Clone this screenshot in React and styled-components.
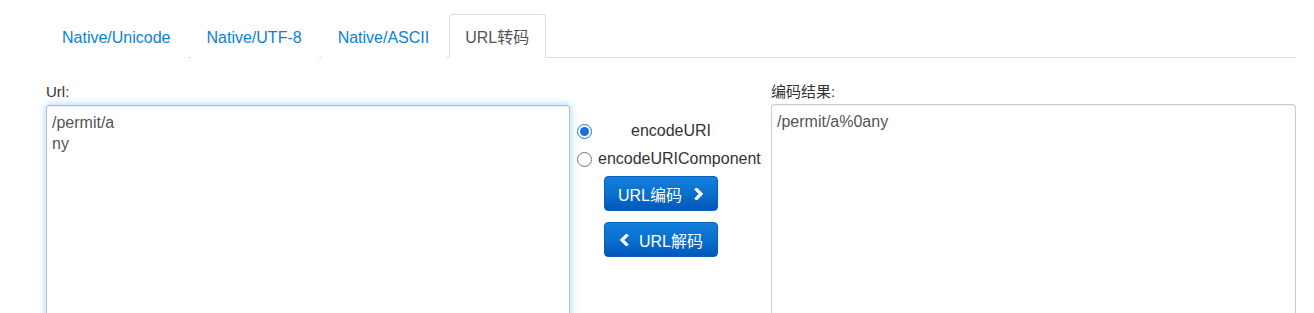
import React from "react";
import styled, { createGlobalStyle } from "styled-components";

const Global = createGlobalStyle`
  html, body { margin: 0; padding: 0; background: #fff; }
  body { font-family: "Liberation Sans", Arial, "Noto Sans CJK SC", sans-serif; color: #333; }
  * { box-sizing: border-box; }
`;

const Page = styled.div`
  padding: 14px 18px 0 46px;
  width: 1314px;
  height: 313px;
  overflow: hidden;
`;

const TabList = styled.ul`
  display: flex;
  list-style: none;
  margin: 0;
  padding: 0;
  width: 1250px;
  border-bottom: 1px solid #ddd;
`;

const Tab = styled.li`
  margin: 0 3px -1px 0;
  padding: 12px 16px 8px 15px;
  font-size: 16px;
  line-height: 22px;
  border: 1px solid ${(p) => (p.$active ? "#ddd" : "transparent")};
  border-bottom-color: ${(p) => (p.$active ? "#fff" : "transparent")};
  border-radius: 4px 4px 0 0;
  background: #fff;
  color: ${(p) => (p.$active ? "#555" : "#0a82d3")};
  cursor: pointer;
  white-space: nowrap;
`;

const Form = styled.div`
  display: grid;
  grid-template-columns: 524px 201px 525px;
  align-items: start;
  margin-top: 24px;
`;

const Field = styled.div`
  display: flex;
  flex-direction: column;
`;

const Label = styled.label`
  font-size: 15px;
  line-height: 20px;
  color: #333;
  margin-bottom: ${(p) => p.$mb}px;
`;

const TextArea = styled.textarea`
  width: 100%;
  height: 300px;
  resize: none;
  padding: 6px 5px 4px;
  font-family: "Liberation Sans", Arial, "Noto Sans CJK SC", sans-serif;
  font-size: 16px;
  line-height: 21px;
  color: #555;
  background: #fff;
  border: 1px solid ${(p) => (p.$focus ? "#a9c4de" : "#ccc")};
  border-radius: 3px;
  outline: none;
  box-shadow: ${(p) =>
    p.$focus
      ? "inset 0 1px 1px rgba(0,0,0,.075), 0 0 8px rgba(102,175,233,.6)"
      : "inset 0 1px 1px rgba(0,0,0,.075)"};
`;

const Middle = styled.div`
  padding: 35px 0 0 7px;
  display: flex;
  flex-direction: column;
`;

const RadioRow = styled.label`
  display: flex;
  align-items: center;
  height: 28px;
  font-size: 16px;
  color: #333;
  white-space: nowrap;
`;

const Radio = styled.input`
  width: 15px;
  height: 15px;
  margin: 0;
  accent-color: #1a6fdc;
`;

const RadioText = styled.span`
  margin-left: ${(p) => p.$ml}px;
`;

const Button = styled.button`
  display: flex;
  align-items: center;
  justify-content: center;
  gap: ${(p) => p.$gap}px;
  width: 114px;
  height: 35px;
  margin-left: 27px;
  margin-top: ${(p) => p.$mt}px;
  padding: 0;
  font-family: "Liberation Sans", Arial, "Noto Sans CJK SC", sans-serif;
  font-size: 16px;
  color: #fff;
  border: 1px solid #0a5db6;
  border-radius: 4px;
  background: linear-gradient(to bottom, #137fdc 0%, #0a6fcf 50%, #0058b9 100%);
  cursor: pointer;
`;

const Chevron = ({ dir }) => (
  <svg width="10" height="12" viewBox="0 0 10 12">
    <polyline
      points={dir === "right" ? "2.5,1.5 7,6 2.5,10.5" : "7.5,1.5 3,6 7.5,10.5"}
      fill="none"
      stroke="#fff"
      strokeWidth="3.2"
      strokeLinecap="square"
      strokeLinejoin="miter"
    />
  </svg>
);

export default function App() {
  const [mode, setMode] = React.useState("uri");
  return (
    <>
      <Global />
      <Page>
        <TabList>
          <Tab>Native/Unicode</Tab>
          <Tab>Native/UTF-8</Tab>
          <Tab>Native/ASCII</Tab>
          <Tab $active>URL转码</Tab>
        </TabList>
        <Form>
          <Field>
            <Label $mb={3}>Url:</Label>
            <TextArea $focus defaultValue={"/permit/a\nny"} />
          </Field>
          <Middle>
            <RadioRow>
              <Radio
                type="radio"
                name="enc"
                checked={mode === "uri"}
                onChange={() => setMode("uri")}
              />
              <RadioText $ml={39}>encodeURI</RadioText>
            </RadioRow>
            <RadioRow>
              <Radio
                type="radio"
                name="enc"
                checked={mode === "comp"}
                onChange={() => setMode("comp")}
              />
              <RadioText $ml={6}>encodeURIComponent</RadioText>
            </RadioRow>
            <Button $mt={3} $gap={12}>
              <span>URL编码</span>
              <Chevron dir="right" />
            </Button>
            <Button $mt={11} $gap={10}>
              <Chevron dir="left" />
              <span>URL解码</span>
            </Button>
          </Middle>
          <Field>
            <Label $mb={2}>编码结果:</Label>
            <TextArea readOnly defaultValue={"/permit/a%0any"} />
          </Field>
        </Form>
      </Page>
    </>
  );
}
